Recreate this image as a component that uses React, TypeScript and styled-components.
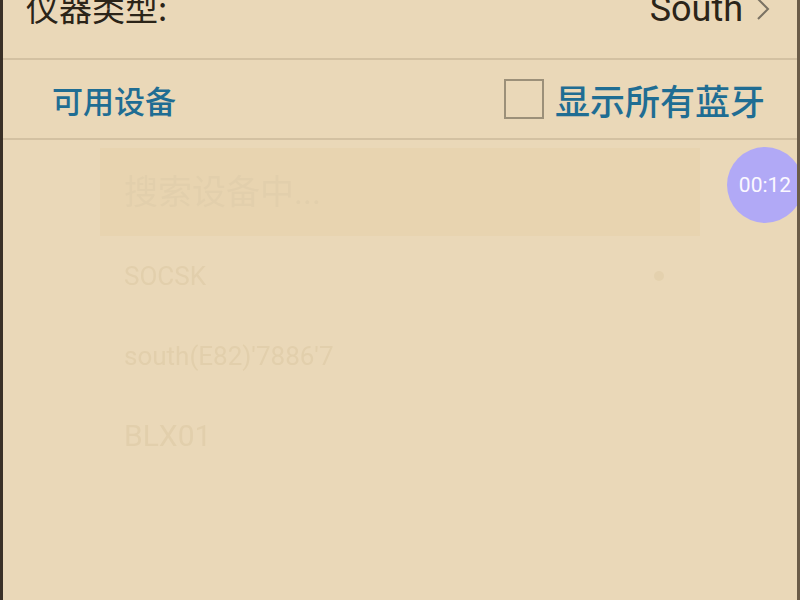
import React from "react";
import styled, { createGlobalStyle } from "styled-components";

const Global = createGlobalStyle`
  html, body { margin: 0; padding: 0; background: #ead8b8; }
  body { font-family: "Noto Sans CJK SC", "Noto Sans", sans-serif; }
  #root { width: 800px; height: 600px; overflow: hidden; }
`;

const Screen = styled.div`
  position: relative;
  width: 800px;
  height: 600px;
  box-sizing: border-box;
  background: #ead8b8;
  border-left: 3px solid #3a3026;
  border-right: 3px solid #6b5c48;
  overflow: hidden;
  display: flex;
  flex-direction: column;
`;

const TypeRow = styled.div`
  height: 60px;
  box-sizing: border-box;
  display: flex;
  align-items: flex-end;
  justify-content: space-between;
  padding: 0 26px 0 23px;
  border-bottom: 2px solid #d3c1a2;
`;

const TypeLabel = styled.div`
  font-size: 33px;
  color: #2b2418;
  line-height: 1;
  margin-bottom: 34px;
`;

const TypeValue = styled.div`
  display: flex;
  align-items: center;
  gap: 12px;
  font-family: Roboto, "Noto Sans", sans-serif;
  font-size: 36px;
  color: #2b2418;
  line-height: 1;
  margin-bottom: 31px;
`;

const HeaderRow = styled.div`
  height: 80px;
  box-sizing: border-box;
  display: flex;
  align-items: center;
  justify-content: space-between;
  padding: 0 32px 0 49px;
  border-bottom: 2px solid #d3c1a2;
`;

const BlueText = styled.div<{ $size?: number }>`
  font-size: ${(p) => p.$size ?? 31}px;
  font-weight: 500;
  color: #1f6d93;
  line-height: 1;
`;

const CheckWrap = styled.label`
  display: flex;
  align-items: center;
  gap: 11px;
`;

const CheckBox = styled.span`
  width: 40px;
  height: 40px;
  box-sizing: border-box;
  border: 2px solid #9c9079;
  display: inline-block;
`;

const List = styled.div`
  display: flex;
  flex-direction: column;
  padding: 8px 0 0 97px;
`;

const Item = styled.div<{ $active?: boolean }>`
  width: 600px;
  height: ${(p) => (p.$active ? 88 : 80)}px;
  box-sizing: border-box;
  display: flex;
  align-items: center;
  justify-content: space-between;
  padding: 0 36px 0 24px;
  background: ${(p) => (p.$active ? "#e8d4b0" : "transparent")};
`;

const Ghost = styled.span<{ $size?: number }>`
  font-family: Roboto, "Noto Sans", "Noto Sans CJK SC", sans-serif;
  font-size: ${(p) => p.$size ?? 26}px;
  color: #e2cfac;
  line-height: 1;
  filter: blur(0.6px);
`;

const Dot = styled.span`
  width: 10px;
  height: 10px;
  border-radius: 50%;
  background: #e4d1ae;
`;

const Timer = styled.div`
  position: absolute;
  left: 724px;
  top: 147px;
  width: 76px;
  height: 76px;
  border-radius: 50%;
  background: #b1a9f6;
  color: #fbf8ff;
  font-family: Roboto, "Noto Sans", sans-serif;
  font-size: 21px;
  display: flex;
  align-items: center;
  justify-content: center;
`;

export default function App() {
  return (
    <>
      <Global />
      <Screen>
        <TypeRow>
          <TypeLabel>仪器类型:</TypeLabel>
          <TypeValue>
            South
            <svg width="16" height="26" viewBox="0 0 16 26">
              <path d="M3 3 L13 13 L3 23" fill="none" stroke="#7a7263" strokeWidth="2" />
            </svg>
          </TypeValue>
        </TypeRow>
        <HeaderRow>
          <BlueText>可用设备</BlueText>
          <CheckWrap>
            <CheckBox />
            <BlueText $size={35}>显示所有蓝牙</BlueText>
          </CheckWrap>
        </HeaderRow>
        <List>
          <Item $active>
            <Ghost $size={34}>搜索设备中...</Ghost>
          </Item>
          <Item>
            <Ghost>SOCSK</Ghost>
            <Dot />
          </Item>
          <Item>
            <Ghost>south(E82)'7886'7</Ghost>
          </Item>
          <Item>
            <Ghost $size={30}>BLX01</Ghost>
          </Item>
        </List>
        <Timer>00:12</Timer>
      </Screen>
    </>
  );
}
